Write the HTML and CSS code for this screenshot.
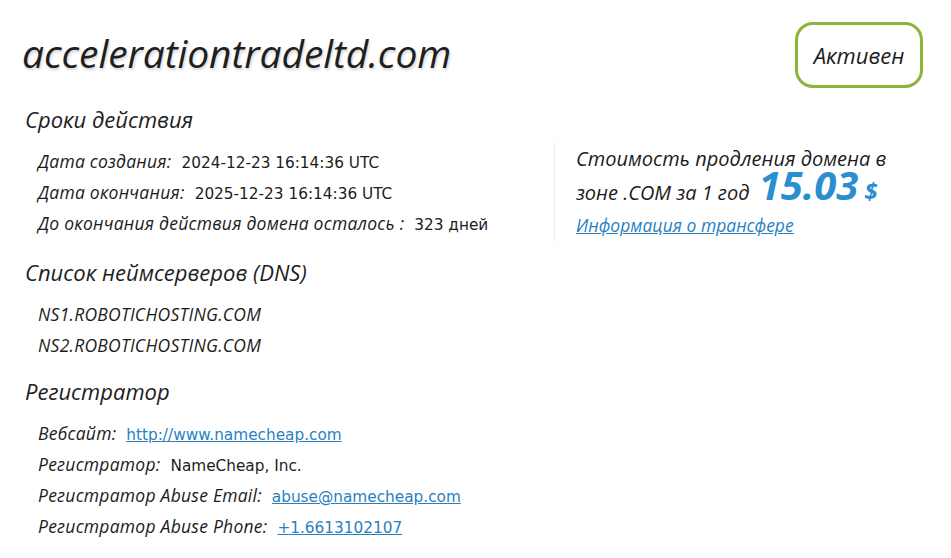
FILE: index.html
```html
<!DOCTYPE html>
<html lang="ru">
<head>
<meta charset="utf-8">
<title>accelerationtradeltd.com</title>
<link rel="stylesheet" href="styles.css">
</head>
<body>
<div class="page">
  <header class="header">
    <h1 class="domain">accelerationtradeltd.com</h1>
    <div class="status">Активен</div>
  </header>
  <div class="top">
    <section class="section main">
      <h2 class="heading">Сроки действия</h2>
      <div class="row"><span class="label">Дата создания:</span><span class="value">2024-12-23 16:14:36 UTC</span></div>
      <div class="row"><span class="label">Дата окончания:</span><span class="value">2025-12-23 16:14:36 UTC</span></div>
      <div class="row"><span class="label">До окончания действия домена осталось :</span><span class="value">323 дней</span></div>
    </section>
    <aside class="price">
      <p class="price-text">Стоимость продления домена в зоне .COM за 1 год <span class="amount">15.03</span><span class="currency">$</span></p>
      <a class="transfer" href="#">Информация о трансфере</a>
    </aside>
  </div>
  <section class="section">
    <h2 class="heading">Список неймсерверов (DNS)</h2>
    <div class="row"><span class="label">NS1.ROBOTICHOSTING.COM</span></div>
    <div class="row"><span class="label">NS2.ROBOTICHOSTING.COM</span></div>
  </section>
  <section class="section">
    <h2 class="heading">Регистратор</h2>
    <div class="row"><span class="label">Вебсайт:</span><a class="value link" href="#">http://www.namecheap.com</a></div>
    <div class="row"><span class="label">Регистратор:</span><span class="value">NameCheap, Inc.</span></div>
    <div class="row"><span class="label">Регистратор Abuse Email:</span><a class="value link" href="#">abuse@namecheap.com</a></div>
    <div class="row"><span class="label">Регистратор Abuse Phone:</span><a class="value link" href="#">+1.6613102107</a></div>
  </section>
</div>
</body>
</html>
```
FILE: styles.css
```css
html, body {
  margin: 0;
  padding: 0;
  background: #ffffff;
}
body {
  font-family: "Open Sans", "Noto Sans", sans-serif;
  color: #1c1c1c;
}
.page {
  padding: 22px 28px 0 22px;
}
.header {
  display: flex;
  justify-content: space-between;
  align-items: flex-start;
  height: 82px;
}
.domain {
  margin: 9px 0 0 0;
  font-size: 39px;
  line-height: 44px;
  font-weight: 500;
  font-style: italic;
  color: #1f1f1f;
  text-shadow: 1px 2px 3px rgba(0,0,0,0.18);
  letter-spacing: -0.1px;
}
.status {
  box-sizing: border-box;
  width: 128px;
  height: 66px;
  border: 3px solid #8cb33a;
  border-radius: 18px;
  display: flex;
  align-items: center;
  justify-content: center;
  font-style: italic;
  font-weight: 500;
  font-size: 22px;
  color: #1c1c1c;
}
.top {
  display: flex;
  align-items: flex-start;
}
.main {
  flex: 0 0 532px;
}
.section {
  margin-top: 15px;
}
.top .section {
  margin-top: 0;
}
.heading {
  margin: 0 0 12px 3px;
  font-size: 22px;
  line-height: 30px;
  font-weight: 400;
  font-style: italic;
  color: #1e1e1e;
}
.row {
  display: flex;
  align-items: baseline;
  gap: 10px;
  padding-left: 16px;
  height: 31px;
  line-height: 31px;
  font-size: 17.5px;
  white-space: nowrap;
}
.label {
  font-style: italic;
  font-weight: 500;
  letter-spacing: 0.25px;
}
.value {
  font-family: "DejaVu Sans", sans-serif;
  font-size: 15.3px;
  font-style: normal;
  font-weight: 400;
}
.link {
  color: #2a7fbf;
  text-decoration: underline;
}
.price {
  margin-top: 38px;
  height: 100px;
  border-left: 1px solid #ececec;
  padding-left: 21px;
  width: 340px;
}
.price-text {
  margin: 0;
  font-size: 20px;
  line-height: 33px;
  font-style: italic;
  font-weight: 500;
}
.amount {
  color: #2a8fd0;
  font-size: 40px;
  line-height: 20px;
  font-weight: 700;
  font-style: italic;
  margin-left: 4px;
}
.currency {
  color: #2a8fd0;
  font-size: 24px;
  line-height: 20px;
  font-weight: 700;
  font-style: italic;
  margin-left: 6px;
}
.transfer {
  display: block;
  font-size: 17.5px;
  line-height: 32px;
  font-style: italic;
  font-weight: 500;
  color: #2a7fbf;
  text-decoration: underline;
}
```
